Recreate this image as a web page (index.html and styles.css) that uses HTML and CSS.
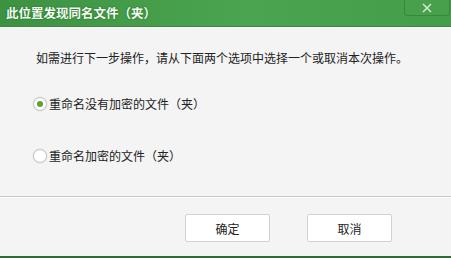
FILE: index.html
```html
<!DOCTYPE html>
<html>
<head>
<meta charset="utf-8">
<link rel="stylesheet" href="styles.css">
</head>
<body>
<div class="dialog">
  <div class="titlebar">
    <span class="title">此位置发现同名文件（夹）</span>
    <button class="close" aria-label="关闭">
      <svg width="10" height="10" viewBox="0 0 10 10"><path d="M1 1L9 9M9 1L1 9" stroke="#d9ecd9" stroke-width="1.4" fill="none"/></svg>
    </button>
  </div>
  <div class="content">
    <p class="msg">如需进行下一步操作，请从下面两个选项中选择一个或取消本次操作。</p>
    <label class="option"><span class="radio checked"></span>重命名没有加密的文件（夹）</label>
    <label class="option"><span class="radio"></span>重命名加密的文件（夹）</label>
  </div>
  <div class="footer">
    <button class="btn">确定</button>
    <button class="btn">取消</button>
  </div>
</div>
</body>
</html>
```
FILE: styles.css
```css
html, body {
  margin: 0;
  padding: 0;
  width: 451px;
  height: 258px;
  overflow: hidden;
  background: #f4f4f4;
  font-family: "Noto Sans CJK SC", "Microsoft YaHei", sans-serif;
}
.dialog {
  width: 451px;
  height: 258px;
  display: flex;
  flex-direction: column;
  box-sizing: border-box;
  border-bottom: 2px solid #2f6b34;
}
.titlebar {
  height: 26px;
  flex: none;
  background: linear-gradient(90deg, #3d9242 0%, #4ba550 55%, #449d49 100%);
  border-bottom: 1px solid #3a8a3f;
  display: flex;
  align-items: flex-start;
  justify-content: space-between;
}
.title {
  color: #f4fbf2;
  font-size: 12.5px;
  font-weight: bold;
  line-height: 26px;
  padding-left: 6px;
  text-shadow: 0 0 2px rgba(0,60,0,0.5);
}
.close {
  width: 46px;
  height: 16px;
  margin-right: 1px;
  padding: 0;
  border: 1px solid #3a8640;
  border-top: none;
  border-radius: 0 0 4px 4px;
  background: #48a04d;
  display: flex;
  align-items: center;
  justify-content: center;
}
.content {
  flex: 1;
  border-top: 1px solid #ffffff;
  border-bottom: 1px solid #c9c9c9;
  padding: 21px 0 0 33px;
  box-sizing: border-box;
}
.msg {
  margin: 0 0 0 3px;
  font-size: 12px;
  line-height: 18px;
  color: #222;
}
.option {
  display: flex;
  align-items: center;
  font-size: 12px;
  line-height: 18px;
  color: #222;
  margin-top: 28px;
  height: 18px;
}
.option + .option {
  margin-top: 34px;
}
.radio {
  width: 12px;
  height: 12px;
  border: 1px solid #c4c4c4;
  border-radius: 50%;
  background: #fff;
  box-shadow: 0 0 1px #ccc;
  margin-right: 2px;
  position: relative;
  flex: none;
}
.radio.checked::after {
  content: "";
  position: absolute;
  left: 3px;
  top: 3px;
  width: 6px;
  height: 6px;
  border-radius: 50%;
  background: #5aa625;
}
.footer {
  height: 59px;
  flex: none;
  border-top: 1px solid #ffffff;
  box-sizing: border-box;
  display: flex;
  justify-content: flex-end;
  gap: 37px;
  padding: 16px 59px 0 0;
}
.btn {
  width: 85px;
  height: 28px;
  background: #ffffff;
  border: 1px solid #d2d2d2;
  border-radius: 2px;
  font-family: inherit;
  font-size: 12px;
  color: #222;
  padding: 0;
}
```
